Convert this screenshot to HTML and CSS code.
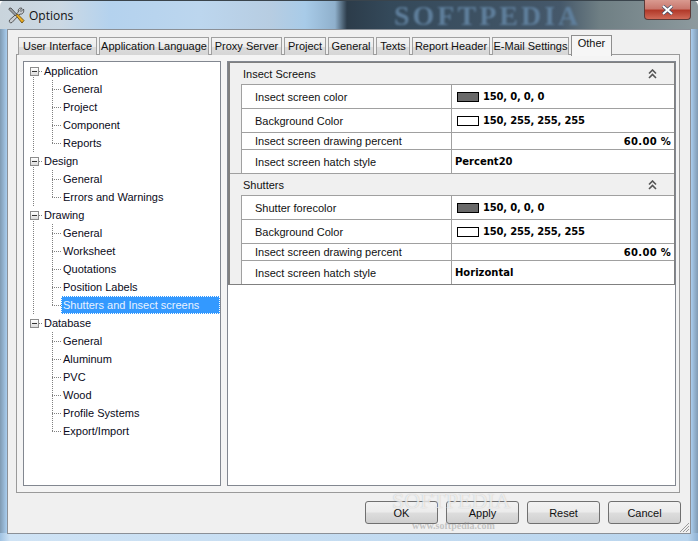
FILE: index.html
```html
<!DOCTYPE html>
<html lang="en">
<head>
<meta charset="utf-8">
<title>Options</title>
<link rel="stylesheet" href="styles.css">
</head>
<body>
<div class="window">
  <header class="titlebar">
    <svg class="app-icon" width="17" height="17" viewBox="0 0 17 17">
      <path d="M15.500 2 L13 4.500 L12 3.500 L14 1.300 C11.500 .3 9.500 2.500 10.500 5 L1.500 13 C.8 15 2 16.500 4 15.500 L12 7 C14.500 7.800 16.500 5 15.500 2 Z" fill="#c8ccd0" stroke="#3a3a3a" stroke-width=".8"/>
      <path d="M1.500 1 L3 1 L9 7.500 L7.500 9 L1 2.500 Z" fill="#9a9fa4" stroke="#333" stroke-width=".7"/>
      <path d="M8 8.500 L9.500 7 L16 13.500 L14 16 Z" fill="#eeb020" stroke="#5a3c06" stroke-width=".8"/>
    </svg>
    <span class="title">Options</span>
    <span class="title-mark">SOFTPEDIA</span>
    <span class="close"><svg width="13" height="10" viewBox="0 0 13 10"><path d="M2 1 L11 9 M11 1 L2 9" stroke="#3b4f6a" stroke-width="3.400"/><path d="M2 1 L11 9 M11 1 L2 9" stroke="#fff" stroke-width="2"/></svg></span>
  </header>
  <div class="client">
    <nav class="tabs">
      <span class="tab">User Interface</span>
      <span class="tab">Application Language</span>
      <span class="tab">Proxy Server</span>
      <span class="tab">Project</span>
      <span class="tab">General</span>
      <span class="tab">Texts</span>
      <span class="tab">Report Header</span>
      <span class="tab">E-Mail Settings</span>
      <span class="tab active">Other</span>
    </nav>
    <div class="tabpanel">
      <ul class="tree">
        <li class="root">
          <div class="root-row"><span class="box"></span><span class="dash"></span><span class="label">Application</span></div>
          <ul class="children">
            <li class="child"><span class="label">General</span></li>
            <li class="child"><span class="label">Project</span></li>
            <li class="child"><span class="label">Component</span></li>
            <li class="child"><span class="label">Reports</span></li>
          </ul>
        </li>
        <li class="root">
          <div class="root-row"><span class="box"></span><span class="dash"></span><span class="label">Design</span></div>
          <ul class="children">
            <li class="child"><span class="label">General</span></li>
            <li class="child"><span class="label">Errors and Warnings</span></li>
          </ul>
        </li>
        <li class="root">
          <div class="root-row"><span class="box"></span><span class="dash"></span><span class="label">Drawing</span></div>
          <ul class="children">
            <li class="child"><span class="label">General</span></li>
            <li class="child"><span class="label">Worksheet</span></li>
            <li class="child"><span class="label">Quotations</span></li>
            <li class="child"><span class="label">Position Labels</span></li>
            <li class="child selected"><span class="label">Shutters and Insect screens</span></li>
          </ul>
        </li>
        <li class="root">
          <div class="root-row"><span class="box"></span><span class="dash"></span><span class="label">Database</span></div>
          <ul class="children">
            <li class="child"><span class="label">General</span></li>
            <li class="child"><span class="label">Aluminum</span></li>
            <li class="child"><span class="label">PVC</span></li>
            <li class="child"><span class="label">Wood</span></li>
            <li class="child"><span class="label">Profile Systems</span></li>
            <li class="child"><span class="label">Export/Import</span></li>
          </ul>
        </li>
      </ul>
      <div class="props-frame">
        <div class="props">
          <section class="group">
            <div class="group-head"><span>Insect Screens</span><svg class="chev" width="9" height="10" viewBox="0 0 9 10"><path d="M1 4.500 L4.500 1 L8 4.500 M1 9 L4.500 5.500 L8 9" fill="none" stroke="#555" stroke-width="1.600"/></svg></div>
            <div class="rows">
              <div class="row tall"><span class="name">Insect screen color</span><span class="value color"><i class="swatch dark"></i>150, 0, 0, 0</span></div>
              <div class="row tall"><span class="name">Background Color</span><span class="value color"><i class="swatch light"></i>150, 255, 255, 255</span></div>
              <div class="row short"><span class="name">Insect screen drawing percent</span><span class="value right">60.00 %</span></div>
              <div class="row tall"><span class="name">Insect screen hatch style</span><span class="value plain">Percent20</span></div>
            </div>
          </section>
          <section class="group">
            <div class="group-head"><span>Shutters</span><svg class="chev" width="9" height="10" viewBox="0 0 9 10"><path d="M1 4.500 L4.500 1 L8 4.500 M1 9 L4.500 5.500 L8 9" fill="none" stroke="#555" stroke-width="1.600"/></svg></div>
            <div class="rows">
              <div class="row tall"><span class="name">Shutter forecolor</span><span class="value color"><i class="swatch dark"></i>150, 0, 0, 0</span></div>
              <div class="row tall"><span class="name">Background Color</span><span class="value color"><i class="swatch light"></i>150, 255, 255, 255</span></div>
              <div class="row short"><span class="name">Insect screen drawing percent</span><span class="value right">60.00 %</span></div>
              <div class="row tall"><span class="name">Insect screen hatch style</span><span class="value plain">Horizontal</span></div>
            </div>
          </section>
        </div>
      </div>
    </div>
    <footer class="actions">
      <button class="btn">OK</button>
      <button class="btn">Apply</button>
      <button class="btn">Reset</button>
      <button class="btn">Cancel</button>
    </footer>
    <svg class="grip" width="12" height="12" viewBox="0 0 12 12"><path d="M11 2 L2 11 M11 5 L5 11 M11 8 L8 11" stroke="#9a9a9a" stroke-width="1"/></svg>
    <span class="mark-big">SOFTPEDIA</span>
    <span class="mark-small">www.softpedia.com</span>
  </div>
</div>
</body>
</html>
```
FILE: styles.css
```css
* { box-sizing: border-box; }
html, body { margin: 0; padding: 0; }
body { width: 698px; height: 541px; overflow: hidden; background: #fff; }
ul { list-style: none; margin: 0; padding: 0; }

.window {
  position: relative;
  width: 698px;
  height: 541px;
  display: flex;
  flex-direction: column;
  padding: 0 7px 7px;
  font: 11px "Liberation Sans", Arial, sans-serif;
  color: #000;
  background:
    linear-gradient(90deg, #9fc2e2 0, #cfe3f5 10px, #b9d5ee 688px, #8fb2d4 698px) bottom / 100% 8px no-repeat,
    linear-gradient(90deg, #7f9ab2 0, #a9cdee 7px, #a9cdee 691px, #7f9ab2 698px) 0 29px / 100% 505px no-repeat,
    linear-gradient(90deg, #c9d4dc 0, #ccd9e4 60px, #b4d2ee 110px, #bcd6ee 200px, #b7cde2 270px, #a8cbe8 305px, #8fb0cc 335px, #2c3c4a 347px, #34495a 390px, #45586a 560px, #6f7f84 600px, #8d9a9e 698px) top / 100% 29px no-repeat;
  border-radius: 6px 6px 0 0;
}

.titlebar {
  position: relative;
  height: 29px;
  flex: none;
  margin: 0 -7px;
  padding: 7px 0 0 8px;
  display: flex;
  align-items: flex-start;
  gap: 4px;
  border-top: 1px solid #3a444c;
}
.app-icon { flex: none; margin-top: -1px; }
.title { font: 12px/17px "Open Sans", sans-serif; color: #111; margin-top: -1px; }
.title-mark {
  position: absolute;
  left: 394px;
  top: 1px;
  font: bold 28px/28px "Liberation Serif", serif;
  letter-spacing: 3px;
  color: #5f7f9c;
  filter: blur(.8px);
}
.close {
  position: absolute;
  right: 7px;
  top: -1px;
  width: 47px;
  height: 20px;
  display: flex;
  align-items: center;
  justify-content: center;
  border: 1px solid #5b3a38;
  border-top: 0;
  border-radius: 0 0 4px 4px;
  background: linear-gradient(#d99a90 0, #c9786e 45%, #b23a2a 55%, #cf6a58 100%);
}

.client {
  position: relative;
  flex: 1;
  display: flex;
  flex-direction: column;
  padding: 5px 10px 0 8px;
  background: #f0f0f0;
  border: 1px solid #8b9097;
}

.tabs {
  display: grid;
  grid-template-columns: 79px 110px 71px 42px 46px 34px 78px 77px 41px;
  column-gap: 2px;
  height: 19px;
  padding-left: 2px;
  align-items: end;
  position: relative;
  z-index: 1;
}
.tab {
  height: 18px;
  border: 1px solid #a0a0a0;
  border-bottom: 0;
  background: linear-gradient(#f4f4f4 0, #ececec 50%, #dcdcdc 51%, #d6d6d6 100%);
  text-align: center;
  line-height: 17px;
  white-space: nowrap;
  color: #111;
}
.tab.active {
  height: 21px;
  margin-bottom: -1px;
  background: #f6f6f6;
  line-height: 15px;
  border-color: #8e8e8e;
}

.tabpanel {
  flex: none;
  height: 439px;
  display: flex;
  gap: 6px;
  padding: 6px;
  border: 1px solid #9a9a9a;
  background: #f4f4f4;
}

.tree {
  flex: none;
  width: 198px;
  padding: 0 0 0 9px;
  background: #fff;
  border: 1px solid #828790;
  color: #0a0a20;
}
.root {
  background: repeating-linear-gradient(#808080 0 1px, transparent 1px 2px) 0 9px / 1px 100% no-repeat;
}
.root:last-child { background: none; }
.root-row {
  height: 18px;
  display: flex;
  align-items: center;
  margin-left: -3px;
}
.box {
  position: relative;
  flex: none;
  width: 9px;
  height: 9px;
  border: 1px solid #8c8c8c;
  background: linear-gradient(#fff, #dcdcdc);
}
.box::after {
  content: "";
  position: absolute;
  left: 1px;
  top: 3px;
  width: 5px;
  height: 1px;
  background: #333;
}
.dash {
  flex: none;
  width: 4px;
  height: 1px;
  margin: 0 1px 0 0;
  background: repeating-linear-gradient(90deg, #808080 0 1px, transparent 1px 2px);
}
.children { margin-left: 19px; }
.child {
  height: 18px;
  display: flex;
  align-items: center;
  background: repeating-linear-gradient(#808080 0 1px, transparent 1px 2px) 0 0 / 1px 100% no-repeat;
}
.child::before {
  content: "";
  flex: none;
  width: 9px;
  height: 1px;
  margin-right: 2px;
  background: repeating-linear-gradient(90deg, #808080 0 1px, transparent 1px 2px);
}
.child:last-child {
  background: repeating-linear-gradient(#808080 0 1px, transparent 1px 2px) 0 0 / 1px 9px no-repeat;
}
.selected .label {
  display: block;
  width: 159px;
  height: 18px;
  line-height: 16px;
  margin-left: -2px;
  padding-left: 1px;
  background: #3399ff;
  color: #e8f2ff;
  border: 1px dotted #fff;
  white-space: nowrap;
}

.props-frame {
  flex: none;
  width: 449px;
  background: #fff;
  border: 1px solid #828790;
}
.props {
  background: #f0f0f0;
  border: 1px solid #808080;
  border-left: 2px solid #808080;
}
.group-head {
  height: 21px;
  display: flex;
  align-items: center;
  justify-content: space-between;
  padding: 0 17px 0 13px;
  background: #f0f0f0;
  color: #111;
}
.rows { margin-left: 11px; background: #fff; }
.row {
  display: grid;
  grid-template-columns: 210px 1fr;
  border-top: 1px solid #a0a0a0;
  border-left: 1px solid #a0a0a0;
  align-items: center;
  background: #fff;
}
.group:first-child { border-bottom: 1px solid #a0a0a0; }
.row.tall { height: 24px; }
.row.short { height: 17px; }
.name { padding-left: 13px; align-self: stretch; display: flex; align-items: center; border-right: 1px solid #a0a0a0; color: #111; }
.value {
  display: flex;
  align-items: center;
  gap: 4px;
  padding-left: 5px;
  font: bold 10px "DejaVu Sans", sans-serif;
  white-space: nowrap;
}
.value.color { letter-spacing: -.2px; }
.value.right { justify-content: flex-end; padding-right: 3px; letter-spacing: .3px; }
.value.plain { padding-left: 3px; }
.swatch { flex: none; width: 22px; height: 10px; border: 1px solid #000; }
.swatch.dark { background: #696969; }
.swatch.light { background: #fff; }

.actions {
  display: flex;
  justify-content: flex-end;
  gap: 8px;
  margin-top: 8px;
  margin-right: -1px;
}
.btn {
  width: 73px;
  height: 23px;
  padding: 0;
  font: 11px "Liberation Sans", Arial, sans-serif;
  color: #111;
  border: 1px solid #707070;
  border-radius: 3px;
  background: linear-gradient(#f2f2f2 0, #ebebeb 48%, #dddddd 52%, #cfcfcf 100%);
}
.grip { position: absolute; right: 0; bottom: 0; }
.mark-big {
  position: absolute;
  left: 384px;
  top: 459px;
  font: 22px/24px "Liberation Serif", serif;
  color: rgba(255,255,255,.7);
  text-shadow: 0 0 1px rgba(130,130,130,.5);
}
.mark-small {
  position: absolute;
  left: 404px;
  top: 490px;
  font: bold 10px/12px "Liberation Serif", serif;
  color: rgba(150,150,150,.5);
}
```
